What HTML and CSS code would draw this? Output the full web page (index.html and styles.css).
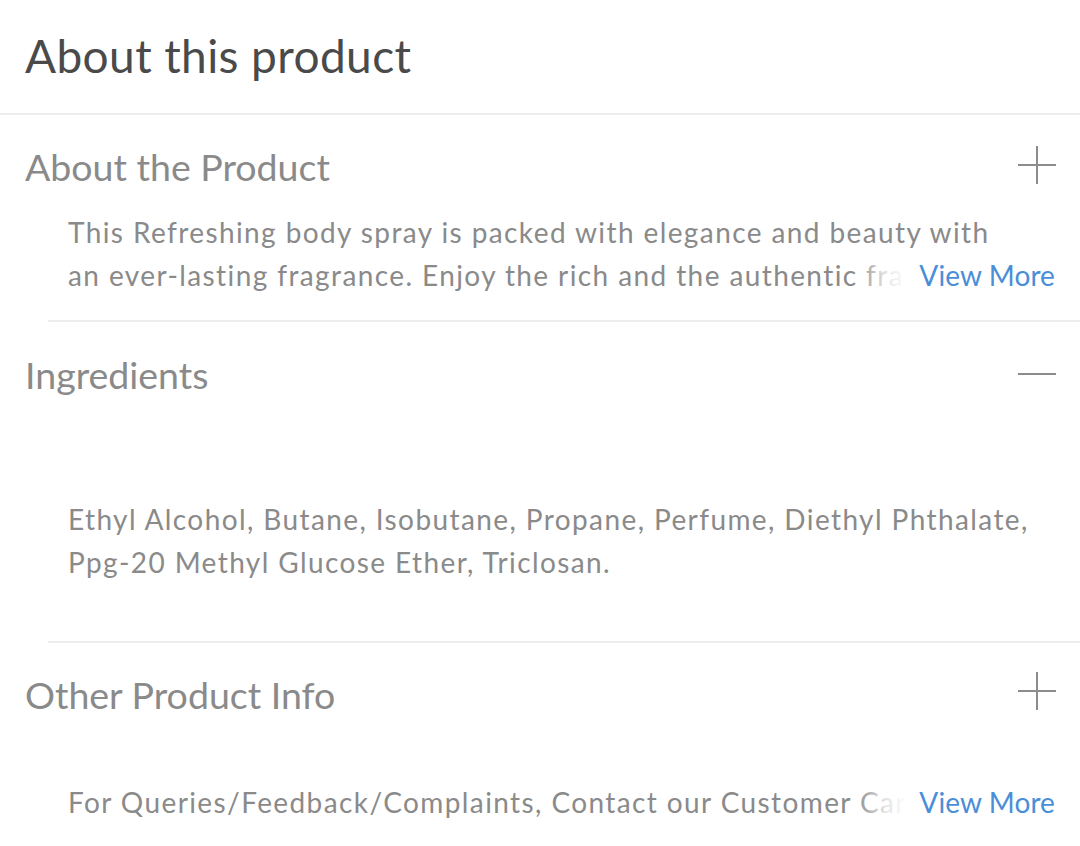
FILE: index.html
```html
<!DOCTYPE html>
<html lang="en">
<head>
<meta charset="utf-8">
<title>About this product</title>
<link rel="stylesheet" href="styles.css">
</head>
<body>
<div class="panel">
  <header class="panel-header">
    <h1 class="panel-title">About this product</h1>
  </header>

  <section class="acc acc-about">
    <div class="acc-head">
      <h2 class="acc-title">About the Product</h2>
      <svg class="acc-icon icon-plus" width="38" height="38" viewBox="0 0 38 38"><path d="M19 0V38M0 19H38" stroke="#8c8c8c" stroke-width="2" fill="none"/></svg>
    </div>
    <div class="acc-body">
      <div class="clamp clamp-2">This Refreshing body spray is packed with elegance and beauty with an ever-lasting fragrance. Enjoy the rich and the authentic fragrance that lasts all day long and keeps you feeling fresh and confident.</div>
      <a class="view-more" href="#">View More</a>
    </div>
  </section>

  <section class="acc acc-ingredients">
    <div class="acc-head">
      <h2 class="acc-title">Ingredients</h2>
      <svg class="acc-icon icon-minus" width="38" height="38" viewBox="0 0 38 38"><path d="M0 19H38" stroke="#8c8c8c" stroke-width="2" fill="none"/></svg>
    </div>
    <div class="acc-body">
      <div class="plain-text">Ethyl Alcohol, Butane, Isobutane, Propane, Perfume, Diethyl Phthalate, Ppg-20 Methyl Glucose Ether, Triclosan.</div>
    </div>
  </section>

  <section class="acc acc-other">
    <div class="acc-head">
      <h2 class="acc-title">Other Product Info</h2>
      <svg class="acc-icon icon-plus" width="38" height="38" viewBox="0 0 38 38"><path d="M19 0V38M0 19H38" stroke="#8c8c8c" stroke-width="2" fill="none"/></svg>
    </div>
    <div class="acc-body">
      <div class="clamp clamp-1">For Queries/Feedback/Complaints, Contact our Customer Care Executive at 1800 266 1000, Address: Customer Care Department, Mumbai, India.</div>
      <a class="view-more" href="#">View More</a>
    </div>
  </section>
</div>
</body>
</html>
```

FILE: styles.css
```css
* { box-sizing: border-box; }

html, body {
  margin: 0;
  padding: 0;
  background: #ffffff;
}

body {
  font-family: Lato, "Open Sans", "Liberation Sans", sans-serif;
  color: #8a8a8a;
  width: 1080px;
  height: 846px;
  overflow: hidden;
}

.panel-header {
  height: 115px;
  padding: 28px 0 0 25px;
  border-bottom: 2px solid #ededed;
}

.panel-title {
  margin: 0;
  font-size: 46px;
  line-height: 56px;
  font-weight: 400;
  letter-spacing: 0.4px;
  color: #4a4a4a;
}

.acc {
  position: relative;
}

.acc-about, .acc-ingredients {
  border-bottom: 2px solid #ededed;
  margin-left: 48px;
}

.acc-head {
  display: flex;
  align-items: center;
  justify-content: space-between;
  padding: 0 24px 0 0;
  margin-left: -23px;
}

.acc-title {
  margin: 0;
  font-size: 37.5px;
  line-height: 46px;
  font-weight: 400;
  color: #8a8a8a;
}

.acc-icon {
  display: block;
  flex: none;
}

.acc-about { padding: 29px 0 23px; }
.acc-about .acc-head .acc-icon { margin-top: -4px; }
.acc-about .acc-body { margin-top: 21px; }

.acc-ingredients { padding: 30px 0 57px; }
.acc-ingredients .acc-head .acc-icon { margin-top: -2px; }
.acc-ingredients .acc-body { margin-top: 100px; }

.acc-other { padding: 29px 0 0 48px; }
.acc-other .acc-head .acc-icon { margin-top: -9px; }
.acc-other .acc-body { margin-top: 63px; }

.acc-body {
  position: relative;
  padding: 0 25px 0 20px;
  font-size: 28px;
  line-height: 43px;
  letter-spacing: 1.4px;
  color: #8a8a8a;
}

.clamp {
  overflow: hidden;
}

.clamp-2 { max-height: 86px; margin-right: 40px; }
.clamp-1 { max-height: 43px; white-space: nowrap; margin-right: 22px; }

.plain-text {
  margin-right: 8px;
}

.view-more {
  position: absolute;
  right: 25px;
  bottom: 0;
  padding-left: 64px;
  background: linear-gradient(to right, rgba(255,255,255,0) 0, rgba(255,255,255,0.75) 30px, #ffffff 52px);
  color: #4a8ed8;
  text-decoration: none;
  letter-spacing: 0.1px;
  line-height: 43px;
}
```
